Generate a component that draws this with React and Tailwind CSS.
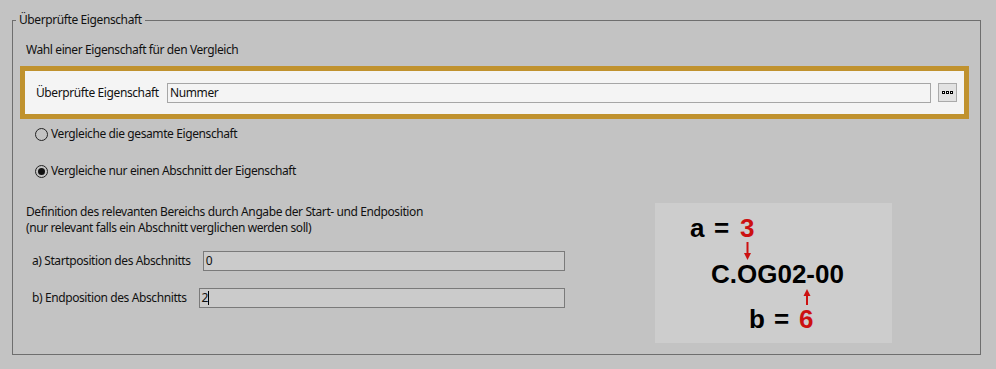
import React from 'react';

const font = { fontFamily: '"Noto Sans", "Open Sans", Arial, sans-serif' };

function Radio({ checked, label }) {
    return (
        <div className="flex items-center h-4 ml-[22px]">
            <span className="w-[13px] h-[13px] rounded-full border border-[#222222] flex items-center justify-center">
                {checked && <span className="w-[7px] h-[7px] rounded-full bg-[#111111]" />}
            </span>
            <span className="ml-[3px]">{label}</span>
        </div>
    );
}

function Diagram() {
    const bold = { fontFamily: '"Liberation Sans", Arial, sans-serif', fontWeight: 700, fontSize: 26, letterSpacing: 0 };
    return (
        <svg width="237" height="140" viewBox="0 0 237 140" className="bg-[#cdcdcd] shrink-0">
            <text x="35" y="34" style={bold} fill="#000">a</text>
            <text x="59" y="34" style={bold} fill="#000">=</text>
            <text x="85" y="34" style={bold} fill="#cc1111">3</text>

            <line x1="92.5" y1="39" x2="92.5" y2="51" stroke="#cc1111" strokeWidth="2" />
            <polygon points="89,50 96,50 92.5,57" fill="#cc1111" />

            <text x="56" y="80" style={bold} fill="#000">C.OG02-00</text>

            <polygon points="148.5,93 155.5,93 152,86" fill="#cc1111" />
            <line x1="152" y1="92" x2="152" y2="102" stroke="#cc1111" strokeWidth="2" />

            <text x="94" y="125" style={bold} fill="#000">b</text>
            <text x="119" y="125" style={bold} fill="#000">=</text>
            <text x="144" y="125" style={bold} fill="#cc1111">6</text>
        </svg>
    );
}

export default function App() {
    return (
        <div className="w-[996px] h-[369px] bg-[#c3c3c3] text-[12px] leading-4 tracking-[-0.4px] text-[#111111] pt-3 pl-3 pr-[15px]" style={font}>
            <fieldset className="border border-[#6e6e6e] pb-[11px]">
                <legend className="ml-[3px] px-[3px] h-4 leading-4">Überprüfte Eigenschaft</legend>

                <div className="mt-[14px] ml-[13px] h-4">Wahl einer Eigenschaft für den Vergleich</div>

                {/* Property selector */}
                <div className="mt-2 ml-[7px] mr-[11px] h-[53px] border-[5px] border-[#c0922e] bg-[#f4f4f4] flex items-center pl-[11px] pr-[7px]">
                    <span className="w-[131px] shrink-0 whitespace-nowrap">Überprüfte Eigenschaft</span>
                    <div className="flex-1 h-5 border border-[#a6a6a6] bg-[#f4f4f4] flex items-center px-[2px]">Nummer</div>
                    <button className="ml-[7px] w-[19px] h-[19px] border border-[#aaaaaa] bg-[#e2e2e2] flex items-center justify-center gap-[1px]">
                        <span className="w-px h-px border border-black bg-white box-content" />
                        <span className="w-px h-px border border-black bg-white box-content" />
                        <span className="w-px h-px border border-black bg-white box-content" />
                    </button>
                </div>

                <div className="mt-[7px]">
                    <Radio label="Vergleiche die gesamte Eigenschaft" />
                </div>
                <div className="mt-[21px]">
                    <Radio checked label="Vergleiche nur einen Abschnitt der Eigenschaft" />
                </div>

                {/* Section range */}
                <div className="mt-6 flex">
                    <div className="ml-[13px] w-[539px] pt-[1px]">
                        <div>Definition des relevanten Bereichs durch Angabe der Start- und Endposition</div>
                        <div>(nur relevant falls ein Abschnitt verglichen werden soll)</div>

                        <div className="mt-[15px] ml-[6px] flex items-center h-5">
                            <span className="shrink-0">a) Startposition des Abschnitts</span>
                            <div className="ml-3 flex-1 h-5 border border-[#7a7a7a] bg-[#cbcbcb] flex items-center px-[2px]">0</div>
                        </div>
                        <div className="mt-[17px] ml-[6px] flex items-center h-5">
                            <span className="shrink-0">b) Endposition des Abschnitts</span>
                            <div className="ml-3 flex-1 h-5 border border-[#7a7a7a] bg-[#cbcbcb] flex items-center px-[2px]">
                                2<span className="w-px h-[14px] bg-black" />
                            </div>
                        </div>
                    </div>
                    <div className="ml-[90px]">
                        <Diagram />
                    </div>
                </div>
            </fieldset>
        </div>
    );
}
